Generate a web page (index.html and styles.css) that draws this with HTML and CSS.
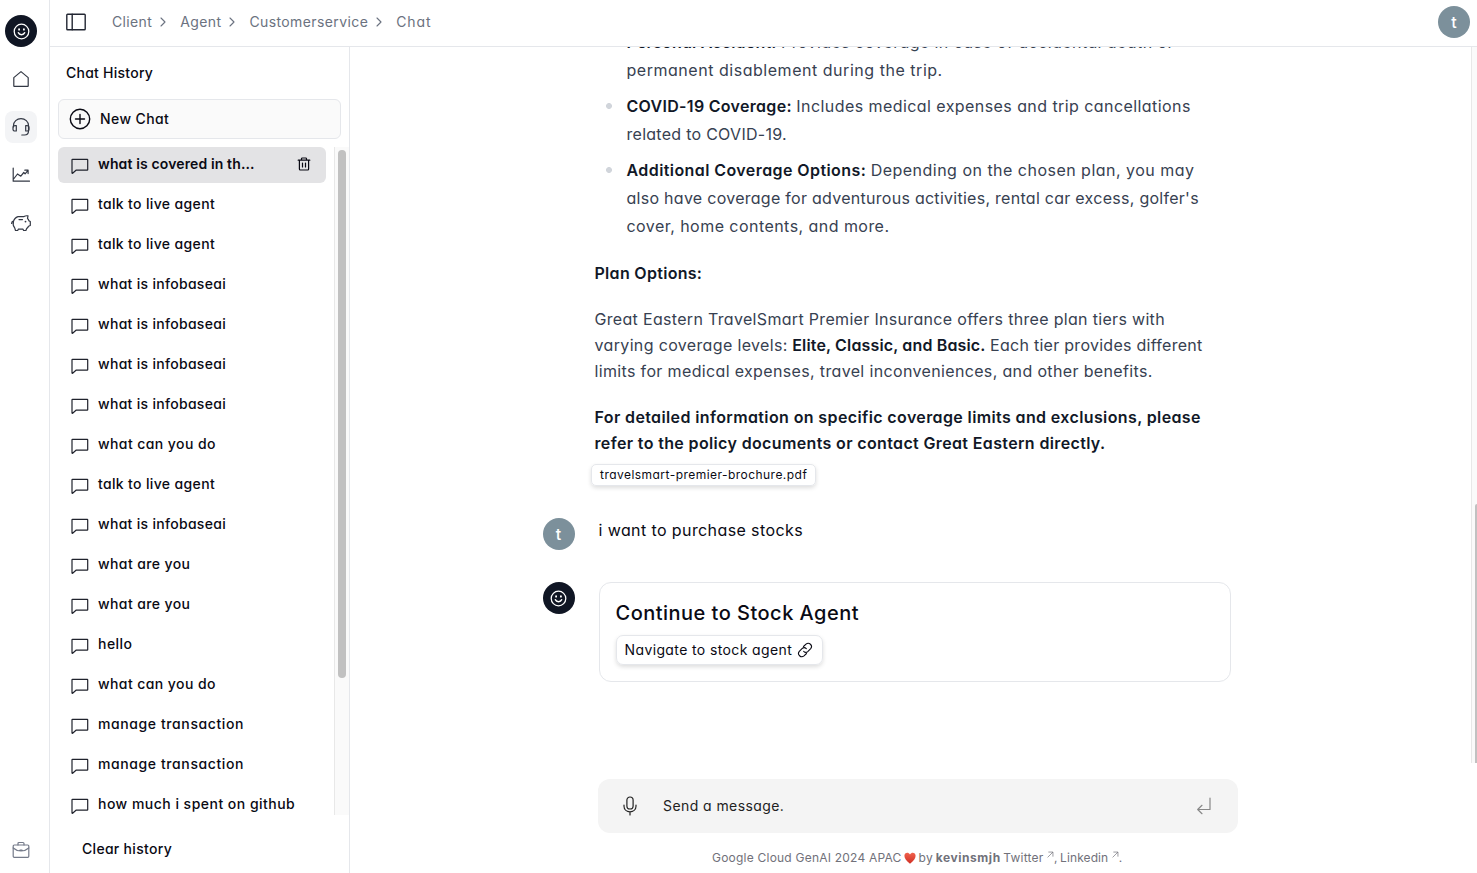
FILE: index.html
```html
<!DOCTYPE html>
<html lang="en">
<head>
<meta charset="utf-8">
<title>Chat</title>
<link rel="stylesheet" href="styles.css">
</head>
<body>
<svg class="defs" aria-hidden="true">
  <symbol id="smile" viewBox="0 0 24 24"><circle cx="12" cy="12" r="10.300"/><path d="M7.600 13.800c1.600 3.600 7.200 3.600 8.800 0" stroke-width="2.200"/><path d="M8.600 8.800v.6M15.400 8.800v.6" stroke-width="2.600"/></symbol>
  <symbol id="msg" viewBox="0 0 18 18"><path d="M1.500 2.300h14.700c.3 0 .5.2.5.5v9.900c0 .3-.2.5-.5.5H5L1.600 16.200c-.3.2-.6 0-.6-.3V2.800c0-.3.200-.5.500-.5z"/></symbol>
</svg>
<div class="app">
  <nav class="rail">
    <span class="avatar bot"><svg class="i17"><use href="#smile"/></svg></span>
    <a class="nav"><svg class="i18" viewBox="0 0 18 18"><path d="M1.800 7.600 9 1.600l7.200 6V16a.4.4 0 0 1-.4.400H2.200a.4.4 0 0 1-.4-.400z"/></svg></a>
    <a class="nav active"><svg class="i18" viewBox="0 0 18 18"><path d="M1.500 9V7.500a7.500 6.900 0 0 1 15 0V13c0 2.500-1.500 4-4 4H9.800"/><path d="M1 9.500Q1 7.600 3 7.600h1.300V13H3Q1 13 1 11.200zM17 9.500q0-1.900-2-1.900h-1.300V13H15q2 0 2-1.800z"/></svg></a>
    <a class="nav"><svg class="i18" viewBox="0 0 18 18"><path d="M1.200 2v13.200h16.300M2 12.500 5.500 8l3.300 2.200 3-3.700 1.300 1.300L16 4.300M12.800 4.200h3.300v3.400"/></svg></a>
    <a class="nav"><svg class="i20" viewBox="0 0 20 20"><path d="M7 3.600h6c1.200-.8 2.600-1 4-.7l-.5 2.500c.7.800 1.200 1.600 1.500 2.500l1.300.6v4l-1.800.7c-.4 1-1 1.700-1.800 2.300l-.8 2h-2.300l-.7-1.400H7.400l-.7 1.400H4.500l-.8-2.700C.9 11.800 2 5.200 7 3.600zM2.200 8.200C1.200 8.400.6 9.300.6 10.500M8 6.600h3.500"/><circle class="dot" cx="14.500" cy="8.600" r=".9"/></svg></a>
    <a class="nav muted last"><svg class="i18" viewBox="0 0 18 18"><rect x="1.200" y="4" width="15.600" height="12.300" rx="1"/><path d="M6 4V2.500q0-1 1-1h4q1 0 1 1V4M1.200 7c4.500 4 11.100 4 15.600 0M8 9h2"/></svg></a>
  </nav>
  <div class="main">
    <header class="top">
      <svg class="i22 panel" viewBox="0 0 22 22"><rect x="1.800" y="3.200" width="18.400" height="15.600" rx=".8"/><path d="M7.200 3.200v15.600"/></svg>
      <div class="crumbs">
        <span class="t s35">Client</span><svg class="chev" viewBox="0 0 8 10"><path d="m2 1 4 4-4 4"/></svg>
        <span class="t s40">Agent</span><svg class="chev" viewBox="0 0 8 10"><path d="m2 1 4 4-4 4"/></svg>
        <span class="t s40">Customerservice</span><svg class="chev" viewBox="0 0 8 10"><path d="m2 1 4 4-4 4"/></svg>
        <span class="t s85">Chat</span>
      </div>
      <span class="avatar user">t</span>
    </header>
    <div class="body">
      <aside class="side">
        <h2 class="s25">Chat History</h2>
        <button class="new"><svg class="i22" viewBox="0 0 22 22"><circle cx="11" cy="11" r="9.700"/><path d="M11 6.500v9M6.500 11h9"/></svg><span class="t s40">New Chat</span></button>
        <div class="scroll">
          <ul class="list">
            <li class="sel"><svg class="i18"><use href="#msg"/></svg><span class="t s13">what is covered in th...</span><svg class="trash" viewBox="0 0 14 14"><path d="M1.200 3.200h11.600M4.500 3V1.800q0-.8.8-.8h3.400q.8 0 .8.800V3M2.400 3.200v8.900q0 .9.900.9h7.400q.9 0 .9-.9V3.200M5.500 6v4M8.500 6v4"/></svg></li>
            <li><svg class="i18"><use href="#msg"/></svg><span class="t s35">talk to live agent</span></li>
            <li><svg class="i18"><use href="#msg"/></svg><span class="t s35">talk to live agent</span></li>
            <li><svg class="i18"><use href="#msg"/></svg><span class="t s30">what is infobaseai</span></li>
            <li><svg class="i18"><use href="#msg"/></svg><span class="t s30">what is infobaseai</span></li>
            <li><svg class="i18"><use href="#msg"/></svg><span class="t s30">what is infobaseai</span></li>
            <li><svg class="i18"><use href="#msg"/></svg><span class="t s30">what is infobaseai</span></li>
            <li><svg class="i18"><use href="#msg"/></svg><span class="t s42">what can you do</span></li>
            <li><svg class="i18"><use href="#msg"/></svg><span class="t s35">talk to live agent</span></li>
            <li><svg class="i18"><use href="#msg"/></svg><span class="t s30">what is infobaseai</span></li>
            <li><svg class="i18"><use href="#msg"/></svg><span class="t s40">what are you</span></li>
            <li><svg class="i18"><use href="#msg"/></svg><span class="t s40">what are you</span></li>
            <li><svg class="i18"><use href="#msg"/></svg><span class="t s48">hello</span></li>
            <li><svg class="i18"><use href="#msg"/></svg><span class="t s42">what can you do</span></li>
            <li><svg class="i18"><use href="#msg"/></svg><span class="t s60">manage transaction</span></li>
            <li><svg class="i18"><use href="#msg"/></svg><span class="t s60">manage transaction</span></li>
            <li><svg class="i18"><use href="#msg"/></svg><span class="t s48">how much i spent on github</span></li>
          </ul>
          <div class="track"><div class="thumb"></div></div>
        </div>
        <div class="clear s30">Clear history</div>
      </aside>
      <main class="chat">
        <div class="view">
          <div class="msgs">
            <div class="prose">
              <ul>
                <li><strong class="s18">Personal Accident:</strong> <span class="s43">Provides coverage in case of accidental death or</span><br><span class="s53">permanent disablement during the trip.</span></li>
                <li><strong class="s30">COVID-19 Coverage:</strong> <span class="s43">Includes medical expenses and trip cancellations</span><br><span class="s28">related to COVID-19.</span></li>
                <li><strong class="s42">Additional Coverage Options:</strong> <span class="s48">Depending on the chosen plan, you may</span><br><span class="s28">also have coverage for adventurous activities, rental car excess, golfer's</span><br><span class="s45">cover, home contents, and more.</span></li>
              </ul>
              <p><strong class="s30">Plan Options:</strong></p>
              <p><span class="s32">Great Eastern TravelSmart Premier Insurance offers three plan tiers with</span><br><span class="s35">varying coverage levels:</span> <strong class="s15">Elite, Classic, and Basic.</strong> <span class="s28">Each tier provides different</span><br><span class="s35">limits for medical expenses, travel inconveniences, and other benefits.</span></p>
              <p><strong class="s38">For detailed information on specific coverage limits and exclusions, please</strong><br><strong class="s36">refer to the policy documents or contact Great Eastern directly.</strong></p>
            </div>
            <a class="chip s46">travelsmart-premier-brochure.pdf</a>
            <div class="row"><span class="avatar user">t</span><p class="say s40">i want to purchase stocks</p></div>
            <div class="row"><span class="avatar bot"><svg class="i17"><use href="#smile"/></svg></span>
              <div class="card"><h3 class="s48">Continue to Stock Agent</h3>
                <a class="go"><span class="t s38">Navigate to stock agent</span><svg class="link" viewBox="0 0 16 16"><path d="M6.500 4.500 9 2.200c3-2.600 7.200 1.300 4.700 4.400L11 9.300c-1.300 1.200-3.100 1.200-4.300 0M9.500 11.500 7 13.800C4 16.400-.2 12.500 2.300 9.400L5 6.700c1.300-1.200 3.100-1.200 4.300 0"/></svg></a></div></div>
          </div>
          <div class="vtrack"><div class="vthumb"></div></div>
        </div>
        <div class="composer"><svg class="mic" viewBox="0 0 16 20"><rect x="4.900" y="1" width="6.200" height="12" rx="3.100"/><path d="M2 9v1.300c0 7.300 12 7.300 12 0V9M8 16v3"/></svg><span class="t s42">Send a message.</span><svg class="enter" viewBox="0 0 16 18"><path d="M14 1v11.500H2M6 8.300l-4.300 4.200L6 16.700"/></svg></div>
        <footer><span class="s22">Google Cloud GenAI 2024 APAC</span><svg class="heart" viewBox="0 0 12 12"><defs><linearGradient id="hg" x2="0" y2="1"><stop stop-color="#f0624d"/><stop offset="1" stop-color="#d02f24"/></linearGradient></defs><path d="M6 11.700C2 8.500.4 6.300.4 3.800.4.300 4.500-.3 6 2.500 7.500-.3 11.600.3 11.600 3.800 11.600 6.300 10 8.500 6 11.700z"/></svg><span class="s40">by</span><strong class="s55">kevinsmjh</strong><span class="s25">Twitter</span><span class="ext"><svg viewBox="0 0 8 8"><path d="M1 7 6.500 1.500M2 1.200h4.800V6"/></svg>,</span><span class="s10">Linkedin</span><span class="ext"><svg viewBox="0 0 8 8"><path d="M1 7 6.500 1.500M2 1.200h4.800V6"/></svg>.</span></footer>
      </main>
    </div>
  </div>
</div>
</body>
</html>
```
FILE: styles.css
```css
* { box-sizing: border-box; margin: 0; padding: 0; }
body { font-family: Inter, "Open Sans", sans-serif; font-feature-settings: "cv11"; color: #0a0a14; background: #fff; overflow: hidden; }
ul { list-style: none; }
svg { fill: none; stroke: currentColor; stroke-width: 1.2; stroke-linecap: round; stroke-linejoin: round; flex: none; display: block; }
.defs { display: none; }
.t { white-space: nowrap; position: relative; top: -.5px; }

/* letter-spacing scale, hundredths of a pixel */
.s10 { letter-spacing: .1px; }
.s13 { letter-spacing: .13px; }
.s15 { letter-spacing: .15px; }
.s18 { letter-spacing: .18px; }
.s22 { letter-spacing: .22px; }
.s25 { letter-spacing: .25px; }
.s28 { letter-spacing: .275px; }
.s30 { letter-spacing: .3px; }
.s32 { letter-spacing: .32px; }
.s35 { letter-spacing: .35px; }
.s36 { letter-spacing: .36px; }
.s38 { letter-spacing: .38px; }
.s40 { letter-spacing: .4px; }
.s42 { letter-spacing: .42px; }
.s43 { letter-spacing: .43px; }
.s45 { letter-spacing: .45px; }
.s46 { letter-spacing: .46px; }
.s48 { letter-spacing: .48px; }
.s53 { letter-spacing: .53px; }
.s55 { letter-spacing: .55px; }
.s60 { letter-spacing: .6px; }
.s85 { letter-spacing: .85px; }

.app { display: flex; height: 873px; }
.rail { width: 50px; border-right: 1px solid #e5e7eb; display: flex; flex-direction: column; align-items: center; padding: 15px 7px 7px 0; gap: 16px; color: #333844; }
.rail .nav { width: 32px; height: 32px; border-radius: 8px; display: grid; place-items: center; }
.rail .active { background: #f3f4f6; }
.rail .muted { color: #757b8a; }
.rail .last { margin-top: auto; }
.avatar { width: 32px; height: 32px; border-radius: 50%; display: grid; place-items: center; flex: none; color: #fff; font-size: 16px; font-weight: 500; }
.bot { background: #101624; }
.bot svg { stroke-width: 1.8; }
.user { background: #7c909b; }
.i17 { width: 17px; height: 17px; }
.i18 { width: 18px; height: 18px; }
.i20 { width: 20px; height: 20px; }
.i22 { width: 22px; height: 22px; stroke-width: 1.4; }
.dot { fill: currentColor; stroke: none; }
.main { flex: 1; display: flex; flex-direction: column; min-width: 0; }
.top { height: 47px; border-bottom: 1px solid #e5e7eb; display: flex; align-items: center; padding: 0 7px 2px 15px; }
.panel { color: #222632; }
.crumbs { display: flex; align-items: center; margin-left: 25px; font-size: 14px; color: #6b7280; flex: 1; }
.chev { width: 8px; height: 10px; margin: 0 13px 0 7px; stroke-width: 1.1; }
.body { flex: 1; display: flex; min-height: 0; }
.side { width: 300px; border-right: 1px solid #e5e7eb; display: flex; flex-direction: column; font-size: 14px; font-weight: 500; }
.side h2 { font-size: 14px; font-weight: 500; line-height: 20px; margin: 16px 0 16px 16px; }
.new { font: inherit; font-feature-settings: inherit; color: inherit; height: 40px; margin: 0 8px; border: 1px solid #e5e7eb; border-radius: 6px; background: #fafafa; display: flex; align-items: center; padding: 0 9px 1px 10px; gap: 9px; }
.scroll { display: flex; height: 668px; margin-top: 8px; overflow: hidden; }
.list { flex: 1; padding: 0 8px; display: flex; flex-direction: column; gap: 4px; }
.list li { height: 36px; flex: none; display: flex; align-items: center; padding: 0 15px 2px 13px; gap: 9px; border-radius: 6px; }
.list li > .i18 { margin-top: 4px; color: #20232d; }
.list .sel { background: #e3e3e5; font-weight: 600; }
.trash { width: 14px; height: 14px; margin-left: auto; }
.track { width: 15px; background: #fafafa; border-left: 1px solid #e8e8e8; padding: 3px 3px 0; }
.thumb { height: 528px; width: 8px; border-radius: 4px; background: #c1c1c1; }
.clear { padding: 24px 0 0 32px; line-height: 20px; }
.chat { flex: 1; display: flex; flex-direction: column; min-width: 0; }
.view { height: 716px; display: flex; overflow: hidden; }
.msgs { flex: 1; padding-left: 192.500px; margin-top: -19px; }
.prose { padding-left: 52px; font-size: 16px; line-height: 26px; color: #374151; white-space: nowrap; }
.prose strong { font-weight: 600; color: #111827; }
.prose ul { display: flex; flex-direction: column; gap: 8px; padding-left: 6px; }
.prose li { line-height: 28px; padding-left: 26px; background: radial-gradient(circle at 8px 14px, #d1d5db 2.600px, transparent 3.300px); }
.prose p { margin-top: 20px; }
.chip { display: block; width: 225px; height: 22px; margin: 8px 0 0 48.500px; border: 1px solid #e5e7eb; border-radius: 5px; box-shadow: 0 2px 4px #0002; font-size: 12px; line-height: 20px; padding-left: 8px; }
.row { display: flex; gap: 24px; margin-top: 32px; }
.say { line-height: 24px; }
.card { width: 632px; height: 100px; border: 1px solid #e5e7eb; border-radius: 12px; padding: 16px; }
.card h3 { font-size: 20px; font-weight: 500; line-height: 28px; }
.go { margin-top: 8px; width: 207px; height: 30px; border: 1px solid #e5e7eb; border-radius: 7px; box-shadow: 0 2px 4px #0002; font-size: 14px; display: flex; align-items: center; padding: 0 0 1px 8px; gap: 5px; }
.link { width: 16px; height: 16px; stroke-width: 1.1; }
.vtrack { width: 6px; border-left: 1px solid #e8e8e8; background: #fafafa; padding: 457px 0 0 3px; }
.vthumb { height: 259px; background: #c1c1c1; border-radius: 2px 0 0; }
.composer { width: 640px; height: 54px; margin: 16px 0 0 248px; background: #f4f4f4; border-radius: 12px; display: flex; align-items: center; padding: 0 26px 1px 24px; font-size: 14px; color: #222; }
.mic { width: 16px; height: 20px; margin-right: 25px; }
.enter { width: 16px; height: 18px; margin-left: auto; color: #888; }
footer { margin: 15px 0 0 362px; display: flex; align-items: center; gap: 2.500px; line-height: 20px; font-size: 12px; color: #71717a; white-space: nowrap; }
.heart { width: 12px; height: 12px; }
.heart path { fill: url(#hg); stroke: none; }
.ext { display: flex; align-items: center; }
.ext svg { width: 7px; height: 7px; margin: -7px 0 0 1px; stroke-width: .8; }
```
